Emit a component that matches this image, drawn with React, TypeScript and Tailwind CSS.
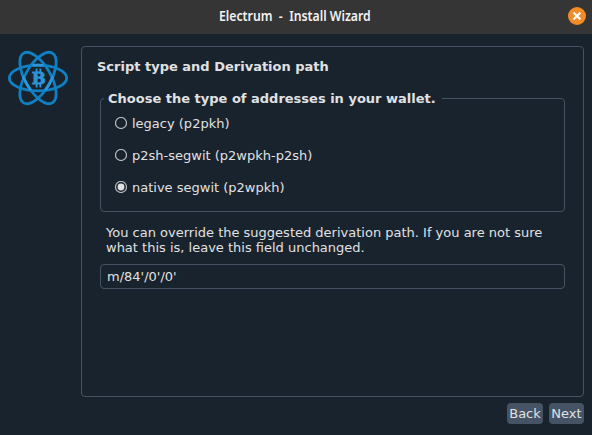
import React, { useState } from 'react';

const OPTIONS = ['legacy (p2pkh)', 'p2sh-segwit (p2wpkh-p2sh)', 'native segwit (p2wpkh)'];

function ElectrumLogo() {
  return (
    <svg className="block h-[60px] w-[62px]" viewBox="0 0 62 60" fill="none">
      <g stroke="#0f80c4" strokeWidth="2.8">
        <ellipse cx="31" cy="30" rx="28.7" ry="12.8" />
        <ellipse cx="31" cy="30" rx="28.7" ry="12.8" transform="rotate(60 31 30)" />
        <ellipse cx="31" cy="30" rx="28.7" ry="12.8" transform="rotate(120 31 30)" />
      </g>
      <g stroke="#2c96d8" strokeWidth="2.8">
        <path d="M25.5 17.4Q31 17 36.5 17.4" />
        <path d="M22 17.8Q31 16.7 38 17.6" transform="rotate(120 31 30)" />
        <path d="M24 17.6Q31 16.7 40 17.8" transform="rotate(240 31 30)" />
      </g>
      <text
        x="31.8"
        y="35.8"
        textAnchor="middle"
        fill="#2b93d6"
        stroke="#2b93d6"
        strokeWidth="0.9"
        fontFamily="'DejaVu Serif', serif"
        fontSize="16.5"
        fontWeight="700"
      >
        B
      </text>
      <path d="M29.6 20.5v4M33.4 20.5v4M29.6 35.5v4M33.4 35.5v4" stroke="#2b93d6" strokeWidth="1.9" />
    </svg>
  );
}

export default function App() {
  const [selected, setSelected] = useState(2);

  return (
    <div className="flex h-[435px] w-[592px] flex-col overflow-hidden bg-[#19232d] font-['DejaVu_Sans',sans-serif] text-[13px] leading-[15px] text-[#e0e1e3]">
      <header className="grid h-[34px] shrink-0 grid-cols-[1fr_auto_1fr] items-center bg-[#353535] pr-[6px]">
        <span />
        <h1 className="ml-[3px] w-[151px] -translate-y-[2px] whitespace-pre font-['Noto_Sans',sans-serif] text-[14px] font-semibold text-[#f2f2f2]">
          <span className="inline-block origin-left scale-x-[0.875]">{'Electrum  -  Install Wizard'}</span>
        </h1>
        <button aria-label="Close" className="-mt-[2px] flex size-[18px] items-center justify-center justify-self-end rounded-full bg-[#f28c28]">
          <svg className="size-[8px]" viewBox="0 0 8 8" stroke="#fff" strokeWidth="2.1">
            <path d="M.6.6l6.8 6.8M7.4.6L.6 7.4" />
          </svg>
        </button>
      </header>

      <div className="flex pt-[12px] pr-[8px]">
        <aside className="w-[81px] shrink-0 pt-[2px] pl-[7px]">
          <ElectrumLogo />
        </aside>
        <main className="h-[351px] flex-1 rounded-[4px] border border-[#455364] pt-[12px] pr-[18px] pl-[15px]">
          <h2 className="font-bold">Script type and Derivation path</h2>
          <div className="pl-[3px]">
            <fieldset className="mt-[17px] h-[121px] rounded-[4px] border border-[#455364] pl-[3px]">
              <legend className="pr-[6px] pl-[4px] font-bold">Choose the type of addresses in your wallet.</legend>
              <div className="flex flex-col gap-[17px] pt-[10px] pl-[11px]">
                {OPTIONS.map((option, index) => (
                  <label key={option} className="flex items-center gap-[5px]" onClick={() => setSelected(index)}>
                    <svg className="mb-[2px] size-[12px]" viewBox="0 0 12 12">
                      <circle cx="6" cy="6" r="5.5" fill="none" stroke="#b5b9bd" strokeWidth="1.2" />
                      {selected === index && <circle cx="6" cy="6" r="3.4" fill="#e0e1e3" />}
                    </svg>
                    {option}
                  </label>
                ))}
              </div>
            </fieldset>
            <p className="mt-[13px] pl-[6px]">
              You can override the suggested derivation path. If you are not sure
              <br />
              what this is, leave this field unchanged.
            </p>
            <input
              defaultValue="m/84'/0'/0'"
              className="mt-[9px] block h-[25px] w-full rounded-[4px] border border-[#455364] bg-transparent px-[6px] outline-none"
            />
          </div>
        </main>
      </div>

      <footer className="flex justify-end gap-[6px] pt-[6px] pr-[8px]">
        <button className="h-[21px] w-[36px] rounded-[4px] bg-[#455364]">Back</button>
        <button className="h-[21px] w-[35px] rounded-[4px] bg-[#455364]">Next</button>
      </footer>
    </div>
  );
}
